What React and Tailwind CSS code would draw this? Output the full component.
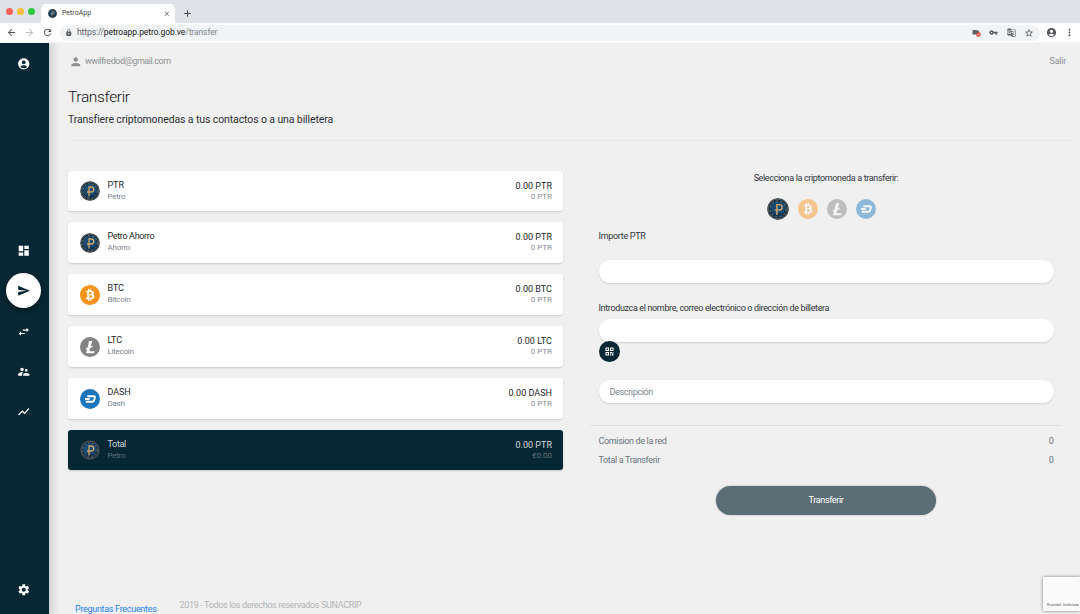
import React from "react";
import { SiBitcoin } from "react-icons/si";
import {
  MdAccountCircle, MdDashboard, MdSend, MdSwapHoriz, MdSupervisorAccount, MdShowChart, MdSettings,
  MdPerson, MdGTranslate, MdVpnKey, MdStarBorder, MdMoreVert, MdLock, MdArrowBack,
  MdArrowForward, MdRefresh, MdAdd, MdClose,
} from "react-icons/md";

function PetroCoin({ className = "size-5" }) {
  return (
    <svg viewBox="0 0 40 40" className={className}>
      <circle cx="20" cy="20" r="19.5" fill="#27343c" />
      <circle cx="20" cy="20" r="18" fill="none" stroke="#5c6668" strokeWidth="1.5" />
      <circle cx="20" cy="20" r="16" fill="#0f3350" />
      <path d="M6 16a15 15 0 0 1 28 0l-6 12H10z" fill="#1a4b70" />
      <circle cx="20" cy="20" r="14.500" fill="none" stroke="#a58f68" strokeWidth="1.300" strokeDasharray="4 4" />
      <path d="M18 31V12h4.500a5 5 0 0 1 0 10H14" fill="none" stroke="#cfa56c" strokeWidth="2.600" />
    </svg>
  );
}

function BitcoinCoin() {
  return (
    <span className="flex size-5 items-center justify-center rounded-full bg-white">
      <SiBitcoin className="size-5 -rotate-14 text-[#f7931a]" />
    </span>
  );
}

function LitecoinCoin() {
  return (
    <svg viewBox="0 0 40 40" className="size-5">
      <circle cx="20" cy="20" r="20" fill="#838383" />
      <path d="M18 8h6.500l-3 10.500 4-1.600-1 3.600-4 1.600-1.800 6.400h10.500L28 32.500H12l2.300-8-3 1.200 1-3.600 3-1.200z" fill="#fff" />
    </svg>
  );
}

function DashCoin() {
  return (
    <svg viewBox="0 0 40 40" className="size-5">
      <circle cx="20" cy="20" r="20" fill="#1c75bc" />
      <path d="M14.500 14.500h13.500q2.500 0 1.800 2.500l-1.800 6q-.8 2.500-3.300 2.500H11.500M10 20h9.500" fill="none" stroke="#fff" strokeWidth="3.700" />
    </svg>
  );
}

function QrIcon() {
  return (
    <svg viewBox="0 0 18 18" className="size-[9px]">
      <path d="M2 2h5v5H2zM11 2h5v5h-5zM2 11h5v5H2z" fill="none" stroke="#fff" strokeWidth="2.200" />
      <path d="M10 10h4v3h-4zM14 13h3v4h-3zM10 14.500h2.500V17H10zM15 10h2v2h-2z" fill="#fff" />
    </svg>
  );
}

const wallets = [
  { name: "PTR", sub: "Petro", amount: "0.00 PTR", value: "0 PTR", Icon: PetroCoin, h: "h-10" },
  { name: "Petro Ahorro", sub: "Ahorro", amount: "0.00 PTR", value: "0 PTR", Icon: PetroCoin, h: "h-[41px]" },
  { name: "BTC", sub: "Bitcoin", amount: "0.00 BTC", value: "0 PTR", Icon: BitcoinCoin, h: "h-[41px]" },
  { name: "LTC", sub: "Litecoin", amount: "0.00 LTC", value: "0 PTR", Icon: LitecoinCoin, h: "h-[41px]" },
  { name: "DASH", sub: "Dash", amount: "0.00 DASH", value: "0 PTR", Icon: DashCoin, h: "h-[41px]" },
  { name: "Total", sub: "Petro", amount: "0.00 PTR", value: "€0.00", Icon: PetroCoin, h: "h-10", dark: true },
];

function WalletCard({ name, sub, amount, value, Icon, h, dark }) {
  const upper = name === name.toUpperCase();
  return (
    <div className={`flex ${h} rounded-[3px] pr-[11px] pl-[11.500px] shadow-[0_1px_2px_rgba(0,0,0,0.16)] ${dark ? "bg-[#062734]" : "bg-white"}`}>
      <div className="flex items-center"><Icon /></div>
      <div className="ml-2 flex flex-1 flex-col pt-2">
        <span className={`text-[9px] leading-3 ${upper ? "tracking-[-0.08px]" : "tracking-[-0.34px]"} ${dark ? "text-[#d5dadc]" : "text-[#212529]"}`}>{name}</span>
        <span className={`text-[8px] leading-3 tracking-[-0.25px] ${dark ? "text-[#5f7079]" : "text-[#7b848c]"}`}>{sub}</span>
      </div>
      <div className="flex flex-col items-end pt-[9px]">
        <span className={`text-[9px] leading-3 tracking-[0.02px] ${dark ? "text-[#d5dadc]" : "text-[#212529]"}`}>{amount}</span>
        <span className={`text-[8px] leading-[10px] tracking-[-0.02px] ${dark ? "text-[#5f7079]" : "text-[#858d94]"}`}>{value}</span>
      </div>
    </div>
  );
}

function Browser() {
  return (
    <header className="relative z-20 shrink-0">
      <div className="flex h-[23px] bg-[#dee1e6] pl-[5.500px]">
        <div className="flex items-center gap-[3.500px]">
          <span className="size-[7.500px] rounded-full bg-[#f9605a]" />
          <span className="size-[7.500px] rounded-full bg-[#f8be3a]" />
          <span className="size-[7.500px] rounded-full bg-[#2bc840]" />
        </div>
        <div className="mt-1 ml-[6px] flex w-[134px] items-center rounded-t-[5px] bg-white pr-[5px] pl-[7px]">
          <PetroCoin className="size-[9px]" />
          <span className="ml-[5px] flex-1 text-[7px] leading-none text-[#3c4043]">PetroApp</span>
          <MdClose className="size-[7.500px] text-[#5f6368]" />
        </div>
        <MdAdd className="mt-2 ml-[6.500px] size-[11px] text-[#3c4043]" />
      </div>
      <div className="flex h-5 items-center border-b border-[#f4f4f5] bg-white pl-[5.500px]">
        <MdArrowBack className="size-[11px] text-[#54585c]" />
        <MdArrowForward className="ml-[7px] size-[11px] text-[#b9bbbd]" />
        <MdRefresh className="ml-[7px] size-[11px] text-[#54585c]" />
        <div className="ml-[7px] flex h-4 w-[980px] items-center rounded-full bg-[#f1f3f4] pr-[6px] pl-[5px]">
          <MdLock className="size-[7.500px] text-[#5f6368]" />
          <span className="ml-[5px] flex-1 text-[8.500px] leading-none tracking-[-0.09px] text-[#5f6368]">
            https://<span className="text-[#202124]">petroapp.petro.gob.ve</span><span className="text-[#80868b]">/transfer</span>
          </span>
          <svg viewBox="0 0 18 16" className="h-2 w-[9px]">
            <path d="M1 2h10v2l3-1v8H1z" fill="#5f6368" />
            <rect x="9" y="7" width="8" height="8" rx="1" fill="#ea4335" />
            <path d="M11 11h4" stroke="#fff" strokeWidth="1.500" />
          </svg>
          <MdVpnKey className="ml-[8px] size-[9px] text-[#54585c]" />
          <MdGTranslate className="ml-[9px] size-[9px] text-[#5f6368]" />
          <MdStarBorder className="ml-[8px] size-[10px] text-[#54585c]" />
        </div>
        <MdAccountCircle className="ml-[6px] size-[11px] text-[#54585c]" />
        <MdMoreVert className="ml-[7px] size-[11px] text-[#54585c]" />
      </div>
    </header>
  );
}

function Sidebar() {
  return (
    <aside className="z-10 flex w-[49px] shrink-0 flex-col items-center bg-[#062734] text-white shadow-[0_0_9px_3px_rgba(0,0,0,0.17)]">
      <MdAccountCircle className="mt-[14px] -ml-[2px] size-[13.500px]" />
      <nav className="mt-[173.500px] -ml-[2px] flex flex-col items-center">
        <MdDashboard className="size-[13.500px]" />
        <span className="mt-[15.500px] flex size-[35px] items-center justify-center rounded-full bg-white shadow-[0_2px_6px_rgba(0,0,0,0.35)]">
          <MdSend className="size-[13.500px] text-[#062734]" />
        </span>
        <MdSwapHoriz className="mt-[16.500px] size-[13.500px]" />
        <MdSupervisorAccount className="mt-[26.500px] size-[13.500px]" />
        <MdShowChart className="mt-[26.500px] size-[13.500px]" />
      </nav>
      <MdSettings className="mt-auto mb-[17.500px] -ml-[2px] size-[13.500px]" />
    </aside>
  );
}

function Field({ placeholder = "" }) {
  return (
    <input
      type="text"
      placeholder={placeholder}
      className="block h-[23px] w-[455px] rounded-full bg-white px-[11px] text-[9px] tracking-[-0.35px] shadow-[0_1px_2px_rgba(0,0,0,0.13)] outline-none placeholder:text-[#7b848c]"
    />
  );
}

function TransferForm() {
  return (
    <section className="ml-[27px] w-[472px] pt-[1px] text-[9px] leading-3 tracking-[-0.355px] text-[#30363b]">
      <p className="text-center">Selecciona la criptomoneda a transferir:</p>
      <div className="mt-[14px] ml-[177px] flex items-center gap-[9px]">
        <PetroCoin className="size-[22px]" />
        <span className="opacity-45"><BitcoinCoin /></span>
        <span className="opacity-45"><LitecoinCoin /></span>
        <span className="opacity-45"><DashCoin /></span>
      </div>
      <div className="px-[8.500px]">
        <label className="mt-[10px] block tracking-[-0.3px]">Importe PTR</label>
        <div className="mt-[18px]"><Field /></div>
        <label className="mt-[19px] block">Introduzca el nombre, correo electrónico o dirección de billetera</label>
        <div className="mt-[5px]"><Field /></div>
        <button className="-mt-px flex size-[21px] items-center justify-center rounded-full bg-[#062734]">
          <QrIcon />
        </button>
        <div className="mt-[18px]"><Field placeholder="Descripción" /></div>
      </div>
      <hr className="mt-[22px] border-[#dfe0e1]" />
      <div className="px-[8.500px] text-[#6c757d]">
        <div className="mt-[9px] flex justify-between"><span>Comision de la red</span><span>0</span></div>
        <div className="mt-[7px] flex justify-between"><span>Total a Transferir</span><span>0</span></div>
      </div>
      <button className="mx-auto mt-[19.500px] block h-[29px] w-[220px] rounded-full bg-[#5b6e75] pb-px text-white shadow-[0_0_2px_rgba(0,0,0,0.3)]">Transferir</button>
    </section>
  );
}

function Footer() {
  return (
    <footer className="mt-auto flex h-[22px] items-start text-[9px] leading-3">
      <a className="mt-[11px] ml-[7px] tracking-[-0.3px] text-[#2582f5]">Preguntas Frecuentes</a>
      <span className="mt-[7px] ml-[23px] tracking-[-0.342px] text-[#b2b4b6]">2019 - Todos los derechos reservados SUNACRIP</span>
    </footer>
  );
}

export default function App() {
  return (
    <div className="flex h-[614px] w-[1080px] flex-col overflow-hidden bg-[#f0f0f0] font-['Roboto',sans-serif]">
      <Browser />
      <div className="flex min-h-0 flex-1">
        <Sidebar />
        <main className="flex flex-1 flex-col pl-[19px]">
          <div className="mt-3 flex h-[13px] items-center justify-between pr-[14px] text-[9px] text-[#8d9092]">
            <span className="flex items-center tracking-[-0.44px]">
              <MdPerson className="mr-[2.500px] ml-[1px] size-[13.500px]" />wwilfredod@gmail.com
            </span>
            <span className="tracking-[-0.25px]">Salir</span>
          </div>
          <h1 className="mt-5 text-[15.500px] leading-[18px] font-light tracking-[-0.35px] text-[#101417]">Transferir</h1>
          <p className="mt-[7px] text-[10.500px] leading-[13px] tracking-[-0.11px] text-[#2b2f33]">Transfiere criptomonedas a tus contactos o a una billetera</p>
          <hr className="mt-[14px] mr-[5px] border-[#e8e8e9]" />
          <div className="mt-[30px] flex">
            <section className="flex w-[495px] flex-col gap-[11px]">
              {wallets.map((wallet, i) => <WalletCard key={i} {...wallet} />)}
            </section>
            <TransferForm />
          </div>
          <Footer />
        </main>
      </div>
      <div className="absolute top-[577px] left-[1043px] flex h-[34px] w-[37px] items-end overflow-hidden bg-[#fafafa] pb-[4px] pl-1 shadow-[0_0_3px_rgba(0,0,0,0.5)]">
        <span className="text-[3px] leading-[4px] whitespace-nowrap text-[#555] tracking-[-0.05px]">Privacidad - Condiciones</span>
      </div>
    </div>
  );
}
